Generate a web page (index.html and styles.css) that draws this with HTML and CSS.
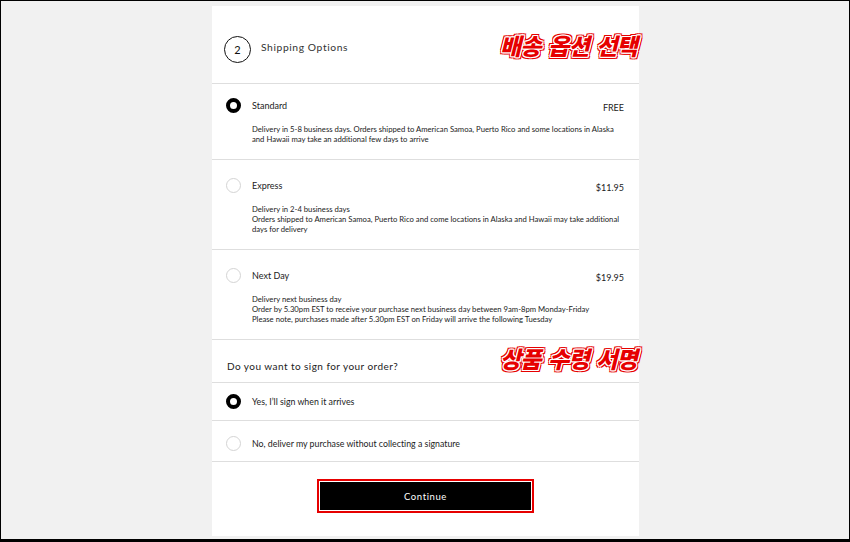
FILE: index.html
```html
<!DOCTYPE html>
<html lang="en">
<head>
<meta charset="utf-8">
<title>Shipping Options</title>
<link rel="stylesheet" href="styles.css">
</head>
<body>
<div class="frame">
  <main class="panel">
    <header class="step">
      <span class="step-num">2</span>
      <h1 class="step-title">Shipping Options</h1>
    </header>
    <span class="note note-top">배송 옵션 선택</span>

    <section class="options">
      <div class="option option-first">
        <span class="radio radio-on"></span>
        <div class="option-body">
          <div class="option-head">
            <span class="option-label">Standard</span>
            <span class="option-price">FREE</span>
          </div>
          <p class="option-desc">Delivery in 5-8 business days. Orders shipped to American Samoa, Puerto Rico and some locations in Alaska<br>and Hawaii may take an additional few days to arrive</p>
        </div>
      </div>
      <div class="option">
        <span class="radio"></span>
        <div class="option-body">
          <div class="option-head">
            <span class="option-label">Express</span>
            <span class="option-price">$11.95</span>
          </div>
          <p class="option-desc">Delivery in 2-4 business days<br>Orders shipped to American Samoa, Puerto Rico and come locations in Alaska and Hawaii may take additional<br>days for delivery</p>
        </div>
      </div>
      <div class="option">
        <span class="radio"></span>
        <div class="option-body">
          <div class="option-head">
            <span class="option-label">Next Day</span>
            <span class="option-price">$19.95</span>
          </div>
          <p class="option-desc">Delivery next business day<br>Order by 5.30pm EST to receive your purchase next business day between 9am-8pm Monday-Friday<br>Please note, purchases made after 5.30pm EST on Friday will arrive the following Tuesday</p>
        </div>
      </div>
    </section>

    <h2 class="sign-title">Do you want to sign for your order?</h2>
    <span class="note note-sign">상품 수령 서명</span>

    <section class="sign">
      <div class="sign-row sign-yes">
        <span class="radio radio-on"></span>
        <span class="sign-label">Yes, I&#8217;ll sign when it arrives</span>
      </div>
      <div class="sign-row sign-no">
        <span class="radio"></span>
        <span class="sign-label">No, deliver my purchase without collecting a signature</span>
      </div>
    </section>

    <div class="actions">
      <button class="continue" type="button">Continue</button>
    </div>
  </main>
</div>
</body>
</html>
```

FILE: styles.css
```css
* { box-sizing: border-box; }

html, body {
  margin: 0;
  padding: 0;
}

body {
  font-family: "Lato", "Noto Sans", sans-serif;
  color: #222;
  font-variant-ligatures: none;
}

.frame {
  width: 850px;
  height: 542px;
  background: #f1f1f1;
  border: 1px solid #000;
  border-bottom-width: 3px;
  padding-top: 5px;
  overflow: hidden;
}

.panel {
  position: relative;
  width: 427px;
  height: 530px;
  margin-left: 211px;
  background: #fff;
}

.step {
  display: flex;
  align-items: center;
  height: 78px;
  padding: 9px 0 0 12px;
  border-bottom: 1px solid #dedede;
}

.step-num {
  width: 27px;
  height: 27px;
  border: 1px solid #111;
  border-radius: 50%;
  display: flex;
  align-items: center;
  justify-content: center;
  font-size: 11px;
  color: #111;
}

.step-title {
  margin: 0 0 0 10px;
  font-size: 10.3px;
  font-weight: 400;
  letter-spacing: 0.6px;
  color: #333;
  position: relative;
  top: -2px;
}

.note {
  position: absolute;
  right: 2px;
  font-family: "Noto Sans CJK KR", sans-serif;
  font-weight: 900;
  font-style: italic;
  font-size: 23px;
  line-height: 1;
  color: #e60000;
  word-spacing: 3px;
  letter-spacing: -0.8px;
  text-shadow:
    1px 0 0 #fff, -1px 0 0 #fff, 0 1px 0 #fff, 0 -1px 0 #fff,
    1px 1px 0 #fff, -1px -1px 0 #fff, 1px -1px 0 #fff, -1px 1px 0 #fff,
    2px 0 0 #e60000, -2px 0 0 #e60000, 0 2px 0 #e60000, 0 -2px 0 #e60000,
    2px 2px 0 #e60000, -2px -2px 0 #e60000, 2px -2px 0 #e60000, -2px 2px 0 #e60000;
}

.note-top { top: 28px; }
.note-sign { top: 341px; }

.option {
  display: flex;
  padding: 18px 15px 15px 14px;
  border-bottom: 1px solid #dedede;
}

.option-first { padding-top: 14px; }

.radio {
  flex: none;
  width: 15px;
  height: 15px;
  border: 1px solid #d4d4d4;
  border-radius: 50%;
  background: #fff;
}

.radio-on {
  border: 4.5px solid #000;
}

.option-body {
  flex: 1;
  margin-left: 11px;
}

.option-head {
  display: flex;
  justify-content: space-between;
  line-height: 15px;
  font-size: 9px;
  color: #222;
}

.option-price {
  position: relative;
  top: 2px;
  font-size: 9px;
}

.option-desc {
  margin: 11px 0 0;
  font-size: 7.7px;
  line-height: 10px;
  color: #222;
}

.sign-title {
  margin: 0;
  padding: 20px 15px 0;
  height: 43px;
  font-size: 10px;
  font-weight: 400;
  letter-spacing: 0.45px;
  color: #222;
  line-height: 12px;
  border-bottom: 1px solid #dedede;
}

.sign-row {
  display: flex;
  align-items: center;
  padding: 0 15px 0 14px;
  border-bottom: 1px solid #dedede;
}

.sign-yes { height: 38px; }
.sign-no { height: 41px; padding-top: 5px; }

.sign-label {
  margin-left: 11px;
  font-size: 8.8px;
  color: #222;
}

.actions {
  display: flex;
  justify-content: center;
  padding-top: 20px;
}

.continue {
  width: 211px;
  height: 28px;
  background: #000;
  color: #fff;
  border: none;
  font-family: "Lato", "Noto Sans", sans-serif;
  font-size: 9.5px;
  letter-spacing: 0.6px;
  box-shadow: 0 0 0 1px #fff, 0 0 0 3px #e60000;
}
```
